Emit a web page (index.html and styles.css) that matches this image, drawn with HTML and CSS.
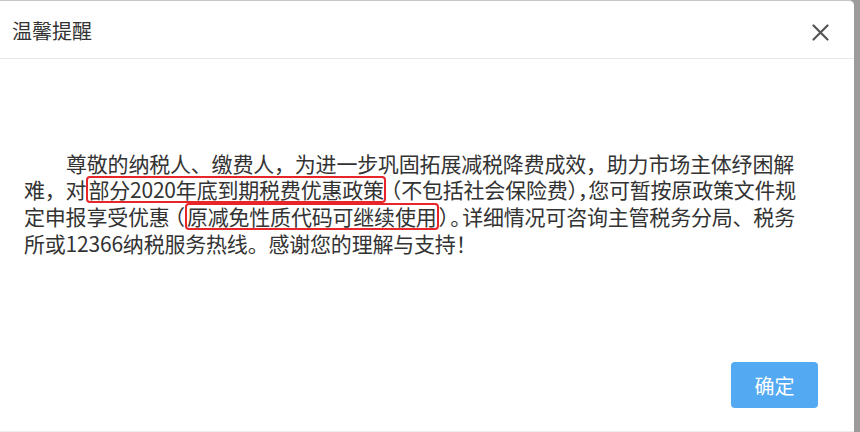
FILE: index.html
```html
<!DOCTYPE html>
<html lang="zh-CN">
<head>
    <meta charset="UTF-8">
    <title>温馨提醒</title>
    <link rel="stylesheet" href="styles.css">
</head>
<body>
<div class="dialog">
    <div class="dialog-header">
        <span class="dialog-title">温馨提醒</span>
        <button class="close-btn" aria-label="关闭">
            <svg width="17" height="17" viewBox="0 0 17 17">
                <path d="M1.5 1.5 L15.5 15.5 M15.5 1.5 L1.5 15.5" stroke="#555" stroke-width="2.2" stroke-linecap="round"/>
            </svg>
        </button>
    </div>

    <div class="dialog-body">
        <p class="notice">尊敬的纳税人、缴费人，为进一步巩固拓展减税降费成效，助力市场主体纾困解<br>难，对<span class="mark">部分2020年底到期税费优惠政策</span><span class="half open">（</span>不包括社会保险费<span class="half">）</span><span class="half">，</span>您可暂按原政策文件规<br>定申报享受优惠<span class="half open">（</span><span class="mark">原减免性质代码可继续使用</span><span class="half close">）</span><span class="half close">。</span>详细情况可咨询主管税务分局、税务<br>所或12366纳税服务热线。感谢您的理解与支持！</p>
    </div>

    <div class="dialog-footer">
        <button class="ok-btn">确定</button>
    </div>
</div>
</body>
</html>
```

FILE: styles.css
```css
* { box-sizing: border-box; }

html, body {
    margin: 0;
    padding: 0;
    height: 100%;
}

body {
    background: #9b9b9b;
    font-family: "Noto Sans CJK SC", "Noto Sans", sans-serif;
    color: #333;
    overflow: hidden;
}

.dialog {
    width: 854px;
    height: 432px;
    background: #fff;
    border-top: 1px solid #c6c6c6;
    border-bottom: 1px solid #ececec;
    border-top-right-radius: 5px;
    display: flex;
    flex-direction: column;
}

.dialog-header {
    height: 58px;
    flex-shrink: 0;
    display: flex;
    align-items: center;
    justify-content: space-between;
    padding: 0 25px 0 12px;
    border-bottom: 1px solid #e8e8e8;
}

.dialog-title {
    font-size: 20px;
    color: #333;
    line-height: 1;
    margin-top: 2px;
}

.close-btn {
    background: none;
    border: none;
    padding: 0;
    width: 17px;
    height: 17px;
    margin-top: 6px;
    cursor: pointer;
    display: flex;
}

.dialog-body {
    flex: 1;
    padding: 91px 20px 0 24px;
}

.notice {
    margin: 0;
    font-size: 21px;
    line-height: 26.4px;
    letter-spacing: -0.2px;
    text-indent: 2em;
    white-space: nowrap;
    color: #333;
}

.half {
    font-feature-settings: "halt";
}

.half.open {
    padding-left: 5px;
}

.half.close {
    padding-right: 1.5px;
}

.mark {
    display: inline-block;
    text-indent: 0;
    line-height: 23px;
    padding: 0;
    border: 2px solid #e8262a;
    border-radius: 4px;
}

.dialog-footer {
    display: flex;
    justify-content: flex-end;
    padding: 0 36px 23px 0;
}

.ok-btn {
    width: 87px;
    height: 46px;
    background: #54aaf2;
    border: none;
    border-radius: 4px;
    color: #fff;
    font-family: inherit;
    font-size: 20px;
    cursor: pointer;
}
```
